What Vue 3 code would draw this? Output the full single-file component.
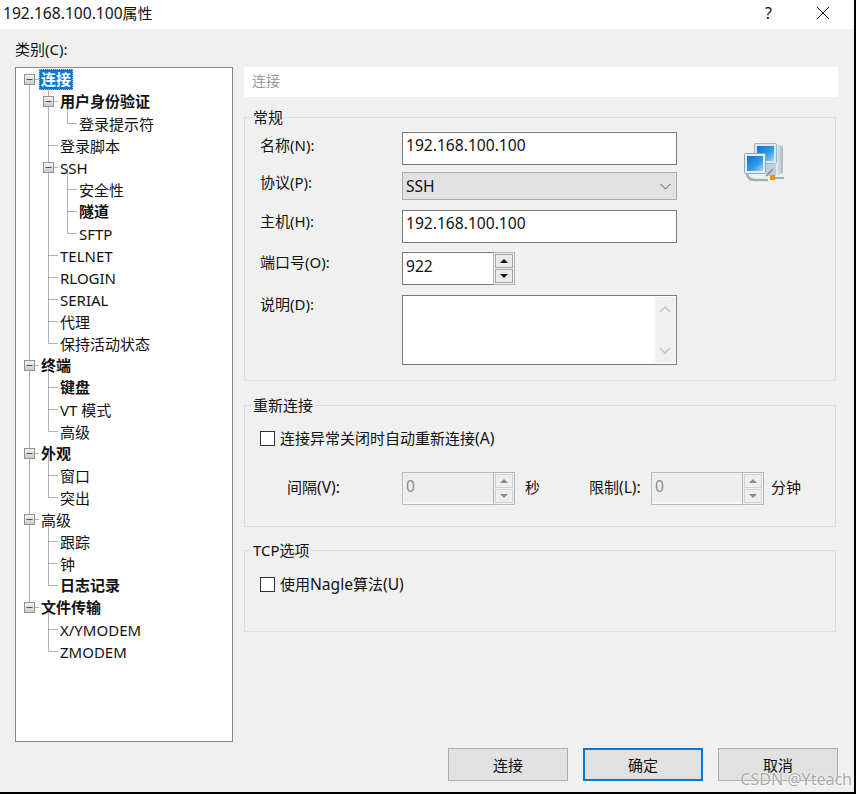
<script setup>
const tree = [
  { label: '连接', bold: true, selected: true, children: [
    { label: '用户身份验证', bold: true, children: [{ label: '登录提示符' }] },
    { label: '登录脚本' },
    { label: 'SSH', children: [{ label: '安全性' }, { label: '隧道', bold: true }, { label: 'SFTP' }] },
    { label: 'TELNET' },
    { label: 'RLOGIN' },
    { label: 'SERIAL' },
    { label: '代理' },
    { label: '保持活动状态' },
  ] },
  { label: '终端', bold: true, children: [{ label: '键盘', bold: true }, { label: 'VT 模式' }, { label: '高级' }] },
  { label: '外观', bold: true, children: [{ label: '窗口' }, { label: '突出' }] },
  { label: '高级', children: [{ label: '跟踪' }, { label: '钟' }, { label: '日志记录', bold: true }] },
  { label: '文件传输', bold: true, children: [{ label: 'X/YMODEM' }, { label: 'ZMODEM' }] },
]

const rowHeight = 22
const guideX = (level) => 13.5 + level * 19
const rowY = (row) => Math.floor(row * rowHeight + rowHeight / 2) + 0.5

// flatten once, the guide lines need the row numbers
const rows = []
const flatten = (items, level) => items.forEach((item) => {
  item.row = rows.length
  rows.push({ ...item, level })
  if (item.children) flatten(item.children, level + 1)
})
flatten(tree, 0)

const lines = []
const addGuides = (items, level, fromY) => {
  const x = guideX(level)
  lines.push(`M${x} ${fromY}V${rowY(items.at(-1).row)}`)
  items.forEach((item) => {
    lines.push(`M${x} ${rowY(item.row)}H${x + 10}`)
    if (item.children) addGuides(item.children, level + 1, rowY(item.row))
  })
}
addGuides(tree, 0, rowY(0))
const guides = lines.join('')

const expanders = rows
  .filter((row) => row.children)
  .map((row) => ({ x: guideX(row.level), y: rowY(row.row), key: row.row }))
</script>

<template>
  <div class="window">
    <header class="titlebar">
      <span class="title"><span class="latin">192.168.100.100</span>属性</span>
      <span class="help">?</span>
      <svg class="close" width="14" height="14" viewBox="0 0 14 14"><path d="M1 1L13 13M13 1L1 13" stroke="#111" stroke-width="1" fill="none" /></svg>
    </header>

    <div class="body">
      <div class="category">类别(C):</div>
      <div class="columns">
        <div class="tree">
          <svg class="tree-lines" width="216" height="673">
            <defs>
              <linearGradient id="exp" x1="0" y1="0" x2="0" y2="1">
                <stop offset="0" stop-color="#f6f6f6" />
                <stop offset="1" stop-color="#c8c8c8" />
              </linearGradient>
            </defs>
            <path :d="guides" fill="none" stroke="#666" stroke-dasharray="1 1" />
            <g v-for="box in expanders" :key="box.key">
              <rect :x="box.x - 5" :y="box.y - 5" width="10" height="10" fill="url(#exp)" stroke="#929292" />
              <path :d="`M${box.x - 3} ${box.y}H${box.x + 3}`" stroke="#3b4f8f" />
            </g>
          </svg>
          <div
            v-for="row in rows"
            :key="row.row"
            class="tree-row"
            :style="{ paddingLeft: `${23 + row.level * 19}px` }"
          >
            <span class="tree-label" :class="{ bold: row.bold, selected: row.selected }">{{ row.label }}</span>
          </div>
        </div>

        <div class="pane">
          <div class="banner">连接</div>

          <section class="group general">
            <span class="legend">常规</span>
            <div class="general-row">
              <div class="form">
                <div class="lbl lbl-name">名称(N):</div>
                <div class="field f-name"><span class="latin">192.168.100.100</span></div>
                <div class="lbl lbl-proto">协议(P):</div>
                <div class="select">
                  <span class="latin">SSH</span>
                  <svg width="11" height="7" viewBox="0 0 11 7"><path d="M.5 1L5.5 6L10.5 1" fill="none" stroke="#555" /></svg>
                </div>
                <div class="lbl lbl-host">主机(H):</div>
                <div class="field f-host"><span class="latin">192.168.100.100</span></div>
                <div class="lbl lbl-port">端口号(O):</div>
                <div class="spin f-port">
                  <div class="spin-value"><span class="latin">922</span></div>
                  <div class="spin-btns">
                    <button class="spin-btn"><i class="tri up" /></button>
                    <button class="spin-btn"><i class="tri down" /></button>
                  </div>
                </div>
                <div class="lbl lbl-desc">说明(D):</div>
                <div class="memo">
                  <div class="memo-bar">
                    <svg width="12" height="8" viewBox="0 0 12 8"><path d="M1 7L6 2L11 7" fill="none" stroke="#c4c4c4" stroke-width="1.6" /></svg>
                    <svg width="12" height="8" viewBox="0 0 12 8"><path d="M1 1L6 6L11 1" fill="none" stroke="#c4c4c4" stroke-width="1.6" /></svg>
                  </div>
                </div>
              </div>
              <svg class="net-icon" width="42" height="41" viewBox="0 0 42 41">
                <defs>
                  <linearGradient id="scr" x1="0" y1="0" x2="1" y2="1">
                    <stop offset="0" stop-color="#0f6fd0" />
                    <stop offset=".6" stop-color="#2f9fe8" />
                    <stop offset="1" stop-color="#a6dcf4" />
                  </linearGradient>
                  <linearGradient id="tower" x1="0" y1="0" x2="1" y2="0">
                    <stop offset="0" stop-color="#e8edf0" />
                    <stop offset="1" stop-color="#a9b8c2" />
                  </linearGradient>
                </defs>
                <path d="M34 2L41 4V31L34 34Z" fill="url(#tower)" />
                <rect x="12.5" y="1.5" width="22" height="20" rx="1" fill="#dfe8ee" stroke="#9fb2bf" />
                <rect x="15" y="4" width="17" height="15" fill="url(#scr)" />
                <path d="M24 22H34V34H24Z" fill="#c3cfd7" />
                <path d="M24 34L31 27" stroke="#8d9ca6" stroke-width="2" />
                <rect x="2.5" y="11.5" width="21" height="20" rx="1" fill="#e6edf2" stroke="#93a7b4" />
                <rect x="5" y="14" width="16" height="15" fill="url(#scr)" />
                <path d="M5 32Q6 38 13 38H26" fill="none" stroke="#9fb0bb" stroke-width="2.6" />
                <path d="M33 36H42" stroke="#9aa9b3" stroke-width="2" />
                <rect x="28" y="33" width="5" height="5" fill="#e8960f" />
              </svg>
            </div>
          </section>

          <section class="group reconnect">
            <span class="legend">重新连接</span>
            <label class="check"><i class="box" />连接异常关闭时自动重新连接<span class="latin">(A)</span></label>
            <div class="interval">
              <span class="i-label">间隔<span class="latin">(V):</span></span>
              <div class="spin disabled">
                <div class="spin-value"><span class="latin">0</span></div>
                <div class="spin-btns">
                  <button class="spin-btn"><i class="tri up" /></button>
                  <button class="spin-btn"><i class="tri down" /></button>
                </div>
              </div>
              <span class="i-unit">秒</span>
              <span class="i-label2">限制<span class="latin">(L):</span></span>
              <div class="spin disabled">
                <div class="spin-value"><span class="latin">0</span></div>
                <div class="spin-btns">
                  <button class="spin-btn"><i class="tri up" /></button>
                  <button class="spin-btn"><i class="tri down" /></button>
                </div>
              </div>
              <span class="i-unit2">分钟</span>
            </div>
          </section>

          <section class="group tcp">
            <span class="legend">TCP选项</span>
            <label class="check"><i class="box" />使用<span class="latin">Nagle</span>算法<span class="latin">(U)</span></label>
          </section>
        </div>
      </div>

      <footer class="footer">
        <button class="btn">连接</button>
        <button class="btn primary">确定</button>
        <button class="btn">取消</button>
      </footer>
    </div>

    <div class="watermark">CSDN @Yteach</div>
  </div>
</template>

<style>
html, body { background: #000; }
</style>

<style scoped>
.window {
  position: relative;
  width: 854px;
  height: 792px;
  background: #f0f0f0;
  color: #111;
  font-family: "Noto Sans", "Noto Sans CJK SC", sans-serif;
  font-size: 15px;
  line-height: 20px;
  overflow: hidden;
}
.latin { font-size: 15.6px; }

.titlebar {
  display: flex;
  align-items: center;
  height: 29px;
  padding: 0 24px 3px 3px;
  box-sizing: border-box;
  background: #fff;
}
.title { flex: 1; }
.help { margin-right: 44px; font-size: 16px; }

.body { padding: 10px 0 0 15px; }
.category { height: 20px; margin-bottom: 8px; }
.columns { display: grid; grid-template-columns: 218px 594px; column-gap: 11px; }

.tree {
  position: relative;
  height: 675px;
  box-sizing: border-box;
  background: #fff;
  border: 1px solid #828790;
}
.tree-lines { position: absolute; left: 0; top: 0; }
.tree-row { position: relative; height: 22px; }
.tree-label { display: inline-block; height: 21px; line-height: 20px; padding: 0 2px; vertical-align: top; margin-top: 2px; }
.tree-label.bold { font-weight: 700; margin-top: 1px; }
.tree-label.selected {
  color: #fff;
  background: #0078d7;
  outline: 1px dotted #f5a623;
  outline-offset: -1px;
}

.banner {
  height: 30px;
  line-height: 28px;
  padding-left: 8px;
  background: #fff;
  color: #9a9a9a;
  font-size: 14px;
}

.group {
  position: relative;
  width: 592px;
  box-sizing: border-box;
  border: 1px solid #dcdcdc;
}
.legend {
  position: absolute;
  left: 8px;
  top: -11px;
  padding-right: 1px;
  background: #f0f0f0;
}
.general { height: 264px; margin-top: 20px; padding: 14px 0 0 15px; }
.reconnect { height: 122px; margin-top: 24px; padding: 22px 0 0 15px; }
.tcp { height: 82px; margin-top: 23px; padding: 23px 0 0 15px; }

.general-row { display: flex; align-items: flex-start; }
.form { display: grid; grid-template-columns: 142px 275px; }
.net-icon { margin: 10px 0 0 65px; }

.lbl { padding-top: 3px; }
.lbl-proto { padding-top: 0; }
.lbl-host { padding-top: 1px; }
.lbl-port { padding-top: 0; }
.lbl-desc { padding-top: 0; margin-top: -1px; }

.field {
  box-sizing: border-box;
  height: 33px;
  padding: 1px 3px;
  line-height: 22px;
  background: #fff;
  border: 1px solid #7a7a7a;
}
.f-name { margin-bottom: 7px; }
.f-host { margin-bottom: 9px; }
.f-port { margin-bottom: 10px; }

.select {
  display: flex;
  align-items: center;
  justify-content: space-between;
  box-sizing: border-box;
  height: 28px;
  margin-bottom: 10px;
  padding: 0 5px 0 3px;
  background: #e1e1e1;
  border: 1px solid #adadad;
}

.spin { display: flex; box-sizing: border-box; width: 113px; height: 33px; }
.spin-value {
  flex: 1;
  padding-left: 3px;
  line-height: 27px;
  background: #fff;
  border: 1px solid #7a7a7a;
  border-right: 0;
}
.spin-btns {
  display: flex;
  flex-direction: column;
  gap: 1px;
  width: 22px;
  box-sizing: border-box;
  padding: 1px;
  background: #f0f0f0;
  border: 1px solid #b5b5b5;
}
.spin-btn {
  flex: 1;
  display: flex;
  align-items: center;
  justify-content: center;
  padding: 0;
  background: #e9e9e9;
  border: 1px solid #a6a6a6;
}
.tri { width: 0; height: 0; border-left: 4px solid transparent; border-right: 4px solid transparent; }
.tri.up { border-bottom: 4px solid #111; }
.tri.down { border-top: 4px solid #111; }

.spin.disabled .spin-value {
  color: #8c8c8c;
  background: #eeeeee;
  border-color: #bcbcbc;
  box-shadow: inset 0 -2px 0 #f7f7f7;
}
.spin.disabled .spin-btn { background: #eeeeee; border-color: #d2d2d2; }
.spin.disabled .tri.up { border-bottom-color: #8a8a8a; }
.spin.disabled .tri.down { border-top-color: #8a8a8a; }

.memo {
  display: flex;
  justify-content: flex-end;
  box-sizing: border-box;
  height: 70px;
  padding: 1px;
  background: #fff;
  border: 1px solid #7a7a7a;
}
.memo-bar {
  display: flex;
  flex-direction: column;
  align-items: center;
  justify-content: space-between;
  width: 20px;
  padding: 8px 0;
  box-sizing: border-box;
  background: #f0f0f0;
}

.check { display: flex; align-items: center; height: 20px; }
.box {
  width: 15px;
  height: 15px;
  margin-right: 5px;
  box-sizing: border-box;
  background: #fff;
  border: 1px solid #333;
}

.interval { display: flex; align-items: center; margin-top: 24px; }
.i-label { width: 115px; padding-left: 27px; margin-top: -3px; }
.i-unit { width: 74px; padding-left: 10px; box-sizing: border-box; margin-top: -3px; }
.i-label2 { width: 62px; margin-top: -3px; }
.i-unit2 { margin-left: 7px; margin-top: -3px; }

.footer {
  display: flex;
  justify-content: flex-end;
  gap: 15px;
  margin-top: 6px;
  padding-right: 16px;
}
.btn {
  width: 120px;
  height: 33px;
  padding: 0;
  font: inherit;
  color: #111;
  background: #e1e1e1;
  border: 1px solid #adadad;
}
.btn.primary { border: 2px solid #0078d7; }

.watermark {
  position: absolute;
  right: 2px;
  bottom: 3px;
  font-size: 16px;
  color: rgba(140, 140, 140, .75);
  text-shadow: 0 0 2px #fff, 0 0 1px #fff;
  pointer-events: none;
}
</style>
